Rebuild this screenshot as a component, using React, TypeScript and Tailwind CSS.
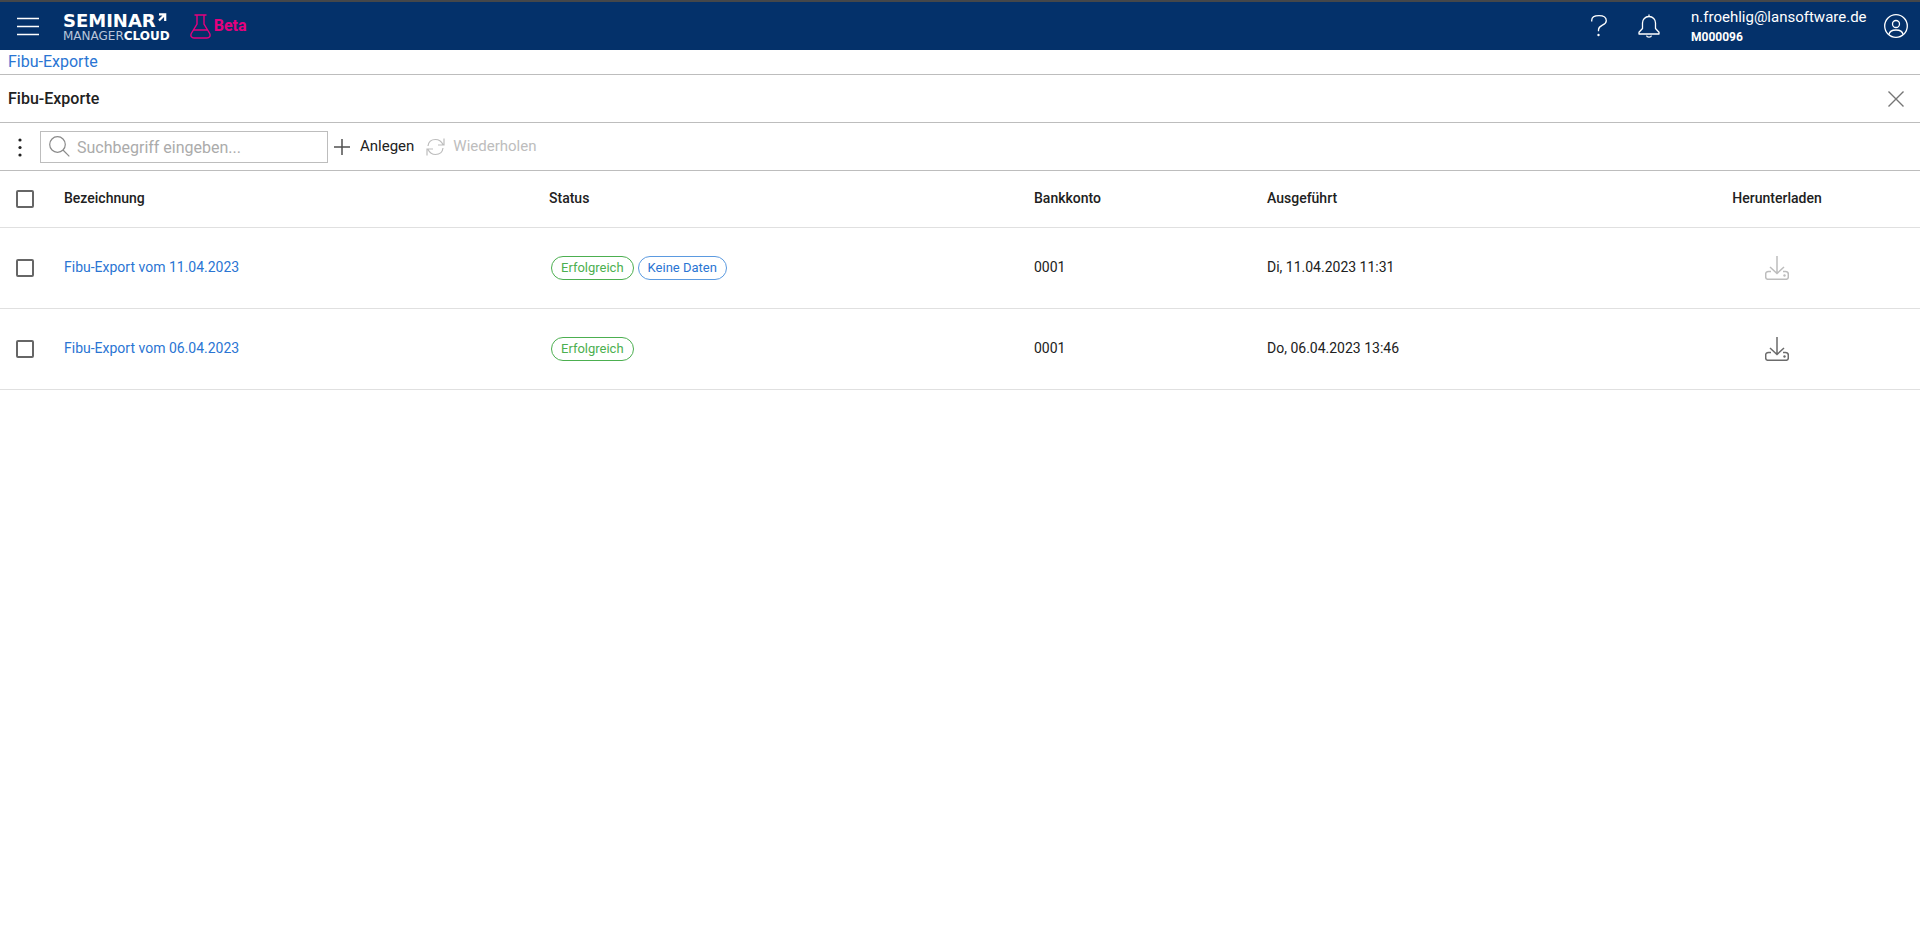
import { useState } from "react";

type ExportRow = {
  id: number;
  name: string;
  status: string[];
  account: string;
  executedAt: string;
  downloadable: boolean;
};

const rows: ExportRow[] = [
  {
    id: 1,
    name: "Fibu-Export vom 11.04.2023",
    status: ["Erfolgreich", "Keine Daten"],
    account: "0001",
    executedAt: "Di, 11.04.2023 11:31",
    downloadable: false,
  },
  {
    id: 2,
    name: "Fibu-Export vom 06.04.2023",
    status: ["Erfolgreich"],
    account: "0001",
    executedAt: "Do, 06.04.2023 13:46",
    downloadable: true,
  },
];

const badgeColors: Record<string, string> = {
  Erfolgreich: "border-[#4caf50] text-[#4caf50]",
  "Keine Daten": "border-[#5b9ae0] text-[#2a75d3]",
};

function Logo() {
  return (
    <a
      href="#"
      aria-label="Seminar Manager Cloud"
      className="ml-[23px] flex flex-col pt-1 font-['DejaVu_Sans',sans-serif] text-white"
    >
      <span className="flex items-start gap-0.5 text-[18px] leading-4 font-bold">
        SEMINAR
        <svg width="9" height="9" viewBox="0 0 9 9" fill="none" stroke="currentColor" strokeWidth="2.2">
          <path d="M1 1.300h6.200V8M7 1.500 1 7.500" />
        </svg>
      </span>
      <span className="text-[12px] leading-[14px] text-[#b9c6da]">
        MANAGER<b className="text-white">CLOUD</b>
      </span>
    </a>
  );
}

function Header() {
  return (
    <header className="flex h-[50px] items-center border-t-2 border-[#45474a] bg-[#04316a] pr-3 pl-4 text-white">
      <button aria-label="Menü" className="p-px">
        <svg width="22" height="22" viewBox="0 0 22 22" stroke="currentColor" strokeWidth="1.4">
          <path d="M0 3.500h22M0 11.500h22M0 19.500h22" />
        </svg>
      </button>
      <Logo />
      <div className="ml-5 flex items-center gap-[3px] text-[#e6007e]">
        <svg width="21" height="25" viewBox="0 0 21 25" fill="none" stroke="currentColor" strokeWidth="1.4">
          <path d="M4.500 1h12M7 1v9L1.300 19.500C.2 22 1.500 24 4 24h13c2.500 0 3.800-2 2.700-4.500L14 10V1M3.500 16h14" />
        </svg>
        <span className="text-base leading-6 font-bold">Beta</span>
      </div>

      <div className="ml-auto flex items-center">
        <button aria-label="Hilfe">
          <svg width="18" height="24" viewBox="0 0 18 24" fill="none" stroke="currentColor" strokeWidth="1.3">
            <path d="M1.700 7.500V6.500C1.700 3.500 4 1.700 9 1.700s7.300 2 7.300 5c0 5-7.800 4-7.800 9v1.500" />
            <circle cx="8.500" cy="21" r="1.200" fill="currentColor" stroke="none" />
          </svg>
        </button>
        <button aria-label="Benachrichtigungen" className="ml-[30px]">
          <svg width="22" height="24" viewBox="0 0 22 24" fill="none" stroke="currentColor" strokeWidth="1.3" strokeLinejoin="round">
            <path d="M11 .5v2M11 2.500c-4 0-6.500 3-6.500 6.500v5.500L1 18.300V20h20v-1.700l-3.500-3.800V9c0-3.500-2.500-6.500-6.500-6.500z" />
            <path d="M8.500 21.700c.5 2 4.500 2 5 0" />
          </svg>
        </button>
        <div className="ml-[31px] flex min-w-[181px] flex-col pt-0.5">
          <span className="text-[15px] leading-5">n.froehlig@lansoftware.de</span>
          <span className="text-xs leading-5 font-bold">M000096</span>
        </div>
        <button aria-label="Profil" className="ml-3">
          <svg width="24" height="24" viewBox="0 0 24 24" fill="none" stroke="currentColor" strokeWidth="1.3">
            <circle cx="12" cy="12" r="11.300" />
            <circle cx="12" cy="10" r="3.500" />
            <path d="M5 20.500c.5-3 2.500-4.500 7-4.500s6.500 1.500 7 4.500" />
          </svg>
        </button>
      </div>
    </header>
  );
}

function Toolbar() {
  return (
    <div className="flex h-12 items-center border-b border-[#bdbdbd]">
      <button aria-label="Weitere Aktionen" className="flex w-10 justify-center">
        <svg width="4" height="20" viewBox="0 0 4 20" fill="#212121">
          <circle cx="2" cy="3" r="1.600" />
          <circle cx="2" cy="10.500" r="1.600" />
          <circle cx="2" cy="18" r="1.600" />
        </svg>
      </button>
      <label className="flex h-8 w-72 items-center border border-[#bdbdbd] pl-2 text-[#8a8a8a]">
        <svg width="21" height="21" viewBox="0 0 21 21" fill="none" stroke="currentColor" strokeWidth="1.2">
          <circle cx="8.500" cy="8.500" r="7.800" />
          <path d="m14 14 6.300 6.300" />
        </svg>
        <input
          type="text"
          aria-label="Suche"
          placeholder="Suchbegriff eingeben..."
          className="ml-[7px] min-w-0 flex-1 bg-transparent pt-0.5 text-base text-[#212121] outline-none placeholder:text-[#ababab]"
        />
      </label>
      <button className="ml-1.5 flex items-center gap-2.5 text-[15px] leading-5 text-[#212121]">
        <svg width="16" height="16" viewBox="0 0 16 16" stroke="#505050" strokeWidth="1.5">
          <path d="M0 8h16M8 0v16" />
        </svg>
        <span className="pb-0.5">Anlegen</span>
      </button>
      <button disabled className="ml-3 flex items-center gap-2 text-[15px] leading-5 text-[#bdbdbd]">
        <svg width="19" height="18" viewBox="0 0 19 18" fill="none" stroke="currentColor" strokeWidth="1.2">
          <path d="M2 8C2.500 4 5.500 1.500 9.500 1.500c3.500 0 6 2 7.500 5M18 .5v6.500h-6M17 10c-.5 4-3.500 6.500-7.500 6.500-3.500 0-6-2-7.500-5M1 17.500V11h6" />
        </svg>
        <span className="pb-0.5">Wiederholen</span>
      </button>
    </div>
  );
}

function Checkbox({
  label,
  checked,
  onChange,
}: {
  label: string;
  checked: boolean;
  onChange: () => void;
}) {
  return (
    <input
      type="checkbox"
      aria-label={label}
      checked={checked}
      onChange={onChange}
      className="block size-[18px] appearance-none rounded-xs border-2 border-[#666666] checked:bg-[#1976d2]"
    />
  );
}

function DownloadIcon() {
  return (
    <svg width="24" height="24" viewBox="0 0 24 24" fill="none" stroke="currentColor" strokeWidth="1.5">
      <path d="M12 0v17M5 11l7 6.500 7-6.500" />
      <path d="M6 15.500H3.500C1.500 15.500.7 16.500.7 18v3c0 1.500.8 2.300 2.300 2.300h18c1.500 0 2.300-.8 2.300-2.300v-3c0-1.500-.8-2.500-2.800-2.500H18" />
      <circle cx="19.500" cy="19.500" r="1.200" fill="currentColor" stroke="none" />
    </svg>
  );
}

function ExportTable() {
  const [selected, setSelected] = useState<number[]>([]);
  const allSelected = selected.length === rows.length;

  const toggle = (id: number) =>
    setSelected((s) => (s.includes(id) ? s.filter((x) => x !== id) : [...s, id]));

  return (
    <table className="w-full table-fixed text-left text-sm text-[#212121]">
      <colgroup>
        <col className="w-16" />
        <col className="w-[485px]" />
        <col className="w-[485px]" />
        <col className="w-[233px]" />
        <col />
        <col className="w-[286px]" />
      </colgroup>
      <thead>
        <tr className="h-14 border-b border-[#e0e0e0]">
          <th className="pl-4">
            <Checkbox
              label="Alle auswählen"
              checked={allSelected}
              onChange={() => setSelected(allSelected ? [] : rows.map((r) => r.id))}
            />
          </th>
          <th className="pb-0.5 font-medium">Bezeichnung</th>
          <th className="pb-0.5 font-medium">Status</th>
          <th className="pb-0.5 font-medium">Bankkonto</th>
          <th className="pb-0.5 font-medium">Ausgeführt</th>
          <th className="pb-0.5 text-center font-medium">Herunterladen</th>
        </tr>
      </thead>
      <tbody>
        {rows.map((row) => (
          <tr key={row.id} className="h-[81px] border-b border-[#e0e0e0]">
            <td className="pl-4">
              <Checkbox
                label={row.name}
                checked={selected.includes(row.id)}
                onChange={() => toggle(row.id)}
              />
            </td>
            <td className="pb-0.5">
              <a href="#" className="text-[#2a75d3]">
                {row.name}
              </a>
            </td>
            <td>
              <div className="flex gap-1 pl-0.5">
                {row.status.map((s) => (
                  <span
                    key={s}
                    className={`h-6 rounded-full border px-[9px] text-[13px] leading-[22px] ${badgeColors[s]}`}
                  >
                    {s}
                  </span>
                ))}
              </div>
            </td>
            <td className="pb-0.5">{row.account}</td>
            <td className="pb-0.5">{row.executedAt}</td>
            <td>
              <button
                aria-label="Herunterladen"
                disabled={!row.downloadable}
                className="mx-auto block text-[#6b6b6b] disabled:text-[#bdbdbd]"
              >
                <DownloadIcon />
              </button>
            </td>
          </tr>
        ))}
      </tbody>
    </table>
  );
}

export default function App() {
  return (
    <div className="min-h-screen bg-white font-[Roboto,sans-serif] text-[#212121]">
      <Header />
      <nav className="flex h-[25px] items-center border-b border-[#bdbdbd] px-2">
        <a href="#" className="text-base leading-6 text-[#2a75d3]">
          Fibu-Exporte
        </a>
      </nav>
      <div className="flex h-12 items-center justify-between border-b border-[#bdbdbd] pr-4 pl-2">
        <h1 className="text-base font-medium">Fibu-Exporte</h1>
        <button aria-label="Schließen" className="text-[#757575]">
          <svg width="16" height="16" viewBox="0 0 16 16" stroke="currentColor" strokeWidth="1.4">
            <path d="m.5.5 15 15M15.500.5l-15 15" />
          </svg>
        </button>
      </div>
      <Toolbar />
      <ExportTable />
    </div>
  );
}
